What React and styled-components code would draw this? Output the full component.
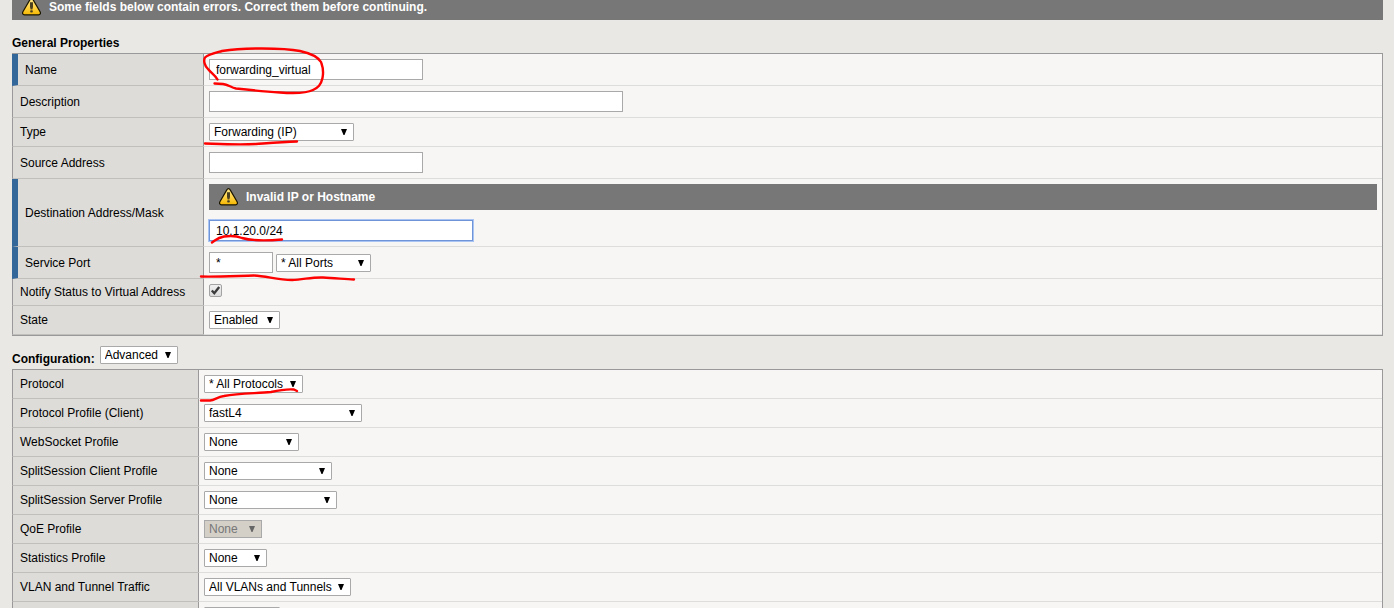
import React from "react";
import styled, { createGlobalStyle } from "styled-components";

const GlobalStyle = createGlobalStyle`
  *, *::before, *::after {
    box-sizing: border-box;
  }

  body {
    margin: 0;
    background-color: #e9e8e4;
    color: #000000;
    font-family: "Liberation Sans", Arial, sans-serif;
    font-size: 12px;
    line-height: 16px;
  }

  input, select {
    font: inherit;
    color: inherit;
  }
`;

const Page = styled.main`
  display: flow-root;
  position: relative;
  padding: 0 11px 0 12px;
`;

const Banner = styled.div`
  display: flex;
  align-items: center;
  gap: 8px;
  height: 26px;
  padding: 0 10px;
  background-color: #777777;
  color: #ffffff;
  font-weight: 700;
`;

// the page message is scrolled partly out of view
const PageBanner = styled(Banner)`
  margin-top: -6px;
`;

const SectionHeader = styled.div`
  display: flex;
  align-items: flex-start;
  gap: 5px;
  padding: 10px 0 1px;
`;

const SectionTitle = styled.h2`
  margin: 0;
  padding-top: 4px;
  font-size: 12px;
  font-weight: 700;
  line-height: 18px;
`;

const Table = styled.table`
  width: 100%;
  table-layout: fixed;
  border-collapse: separate;
  border-spacing: 0;
  border: 1px solid #999999;
  border-left: none;
  background-color: #f7f6f5;
`;

const LabelColumn = styled.col`
  width: ${({ $width }) => $width}px;
`;

const LabelCell = styled.th`
  padding: 0 7px;
  border-left: ${({ $required }) =>
    $required ? "6px solid #336699" : "1px solid #999999"};
  border-bottom: 1px solid #c0bfbb;
  background-color: #dddcd8;
  font-weight: 400;
  text-align: left;
  white-space: nowrap;
`;

const FieldCell = styled.td`
  padding: 5px;
  border-left: 1px solid #999999;
  border-bottom: 1px solid #dddddb;
`;

const FieldStack = styled.div`
  display: flex;
  flex-direction: column;
  align-items: flex-start;
  gap: 10px;

  ${Banner} {
    align-self: stretch;
  }
`;

const FieldRow = styled.div`
  display: flex;
  align-items: center;
  gap: 3px;
`;

const TextInput = styled.input`
  display: block;
  width: ${({ $width }) => $width}px;
  height: 21px;
  padding: 0 6px;
  border: 1px solid ${({ $active }) => ($active ? "#6f95d8" : "#a9a9a9")};
  box-shadow: ${({ $active }) => ($active ? "0 0 0 1px #a9c4f2" : "none")};
  background-color: #ffffff;
  outline: none;
`;

const SelectBox = styled.div`
  position: relative;
  width: ${({ $width }) => $width}px;
  height: 18px;

  svg {
    position: absolute;
    top: 6px;
    right: 6px;
    pointer-events: none;
  }
`;

const StyledSelect = styled.select`
  appearance: none;
  display: block;
  width: 100%;
  height: 18px;
  padding: 0 0 0 4px;
  border: 1px solid #a9a9a9;
  border-radius: 1px;
  background-color: #ffffff;
  line-height: 16px;
  outline: none;

  &:disabled {
    border-radius: 0;
    background-color: #d4d0c8;
    color: #777777;
    opacity: 1;
  }
`;

const CheckboxBox = styled.div`
  position: relative;
  height: 16px;

  svg {
    position: absolute;
    top: 0;
    left: 0;
    pointer-events: none;
  }
`;

const StyledCheckbox = styled.input`
  appearance: none;
  display: block;
  width: 13px;
  height: 13px;
  margin: 0;
  border: 1px solid #a3a3a3;
  border-radius: 2px;
  background: linear-gradient(#f0f0f0, #dcdcdc);
`;

const Markup = styled.svg`
  position: absolute;
  top: 0;
  left: 0;
  pointer-events: none;
`;

const WarningIcon = () => (
  <svg width="19" height="18" viewBox="0 0 19 18" aria-hidden="true">
    <defs>
      <linearGradient id="warn" x1="0" y1="0" x2="0" y2="1">
        <stop offset="0" stopColor="#ffe98a" />
        <stop offset="0.5" stopColor="#ffd34a" />
        <stop offset="1" stopColor="#f5b800" />
      </linearGradient>
    </defs>
    <path
      d="M9.500 0.700c.7 0 1.300.4 1.700 1.200l6.900 11.900c.8 1.500.2 3-1.500 3H2.400c-1.700 0-2.300-1.500-1.500-3L7.800 1.900C8.200 1.100 8.800.7 9.500.7z"
      fill="url(#warn)"
      stroke="#1c1600"
      strokeWidth="1.200"
    />
    <path d="M8 4.200h3v4.800l-.6 2.500H8.600L8 9z" fill="#4a4020" />
    <rect x="8.200" y="12.300" width="2.600" height="2.200" rx="0.8" fill="#4a4020" />
  </svg>
);

const Select = ({ id, width, value, options = [], disabled, label }) => (
  <SelectBox $width={width}>
    <StyledSelect
      id={id}
      defaultValue={value}
      disabled={disabled}
      aria-label={label}
    >
      {[value, ...options].map((option) => (
        <option key={option}>{option}</option>
      ))}
    </StyledSelect>
    <svg width="7" height="6" viewBox="0 0 7 6" aria-hidden="true">
      <path d="M0 0h6L3.500 6h-1z" fill={disabled ? "#666666" : "#000000"} />
    </svg>
  </SelectBox>
);

const Field = ({ id, label, required, children }) => (
  <tr>
    <LabelCell scope="row" $required={required}>
      <label htmlFor={id}>{label}</label>
    </LabelCell>
    <FieldCell>{children}</FieldCell>
  </tr>
);

const configuration = [
  { id: "protocol", label: "Protocol", value: "* All Protocols", width: 99, options: ["TCP", "UDP", "SCTP"] },
  { id: "profile-client", label: "Protocol Profile (Client)", value: "fastL4", width: 158 },
  { id: "websocket", label: "WebSocket Profile", value: "None", width: 95, options: ["websocket"] },
  { id: "split-client", label: "SplitSession Client Profile", value: "None", width: 128 },
  { id: "split-server", label: "SplitSession Server Profile", value: "None", width: 133 },
  { id: "qoe", label: "QoE Profile", value: "None", width: 58, disabled: true },
  { id: "statistics", label: "Statistics Profile", value: "None", width: 63, options: ["stats"] },
  { id: "vlan", label: "VLAN and Tunnel Traffic", value: "All VLANs and Tunnels", width: 147 },
  { id: "snat", label: "Source Address Translation", value: "None", width: 76, options: ["SNAT"] },
];

const App = () => {
  return (
    <>
      <GlobalStyle />
      <Page>
        <PageBanner role="alert">
          <WarningIcon />
          Some fields below contain errors. Correct them before continuing.
        </PageBanner>

        <SectionHeader>
          <SectionTitle>General Properties</SectionTitle>
        </SectionHeader>
        <Table>
          <colgroup>
            <LabelColumn $width={191} />
            <col />
          </colgroup>
          <tbody>
            <Field id="name" label="Name" required>
              <TextInput id="name" $width={214} defaultValue="forwarding_virtual" />
            </Field>
            <Field id="description" label="Description">
              <TextInput id="description" $width={414} />
            </Field>
            <Field id="type" label="Type">
              <Select
                id="type"
                width={145}
                value="Forwarding (IP)"
                options={["Standard", "Performance (Layer 4)"]}
              />
            </Field>
            <Field id="source" label="Source Address">
              <TextInput id="source" $width={214} />
            </Field>
            <Field id="destination" label="Destination Address/Mask" required>
              <FieldStack>
                <Banner role="alert">
                  <WarningIcon />
                  Invalid IP or Hostname
                </Banner>
                <TextInput
                  id="destination"
                  $width={264}
                  $active
                  defaultValue="10.1.20.0/24"
                />
              </FieldStack>
            </Field>
            <Field id="port" label="Service Port" required>
              <FieldRow>
                <TextInput id="port" $width={64} defaultValue="*" />
                <Select
                  label="Port name"
                  width={95}
                  value="* All Ports"
                  options={["HTTP", "HTTPS"]}
                />
              </FieldRow>
            </Field>
            <Field id="notify" label="Notify Status to Virtual Address">
              <CheckboxBox>
                <StyledCheckbox id="notify" type="checkbox" defaultChecked />
                <svg width="13" height="13" viewBox="0 0 13 13" aria-hidden="true">
                  <path
                    d="M2.800 6.500l2.500 2.700L10.200 3"
                    fill="none"
                    stroke="#3c3c3c"
                    strokeWidth="2.400"
                  />
                </svg>
              </CheckboxBox>
            </Field>
            <Field id="state" label="State">
              <Select id="state" width={71} value="Enabled" options={["Disabled"]} />
            </Field>
          </tbody>
        </Table>

        <SectionHeader>
          <SectionTitle as="label" htmlFor="mode">
            Configuration:
          </SectionTitle>
          <Select id="mode" width={78} value="Advanced" options={["Basic"]} />
        </SectionHeader>
        <Table>
          <colgroup>
            <LabelColumn $width={186} />
            <col />
          </colgroup>
          <tbody>
            {configuration.map(({ id, label, ...select }) => (
              <Field key={id} id={id} label={label}>
                <Select id={id} {...select} />
              </Field>
            ))}
          </tbody>
        </Table>

        {/* hand-drawn highlights */}
        <Markup width="480" height="410" viewBox="0 0 480 410" aria-hidden="true">
          <g
            fill="none"
            stroke="#ff0000"
            strokeWidth="2.400"
            strokeLinecap="round"
            strokeLinejoin="round"
          >
            <path d="M217.500 79.500C215 75 211 73 208 69C204 65 203.500 60 205 57.500C208 54.500 215 53 222 51C235 49 250 48.500 262 48.500C278 48.500 290 49 300 51C309 53 318 57 321 62C323 67 323.500 73 322.500 78C321 85 318 87.500 313 90C306 93.500 294 93.500 280 92.500C265 91.500 250 90 236 88.500C231 87.500 228 84.500 223 84L214.500 83.500" />
            <path d="M205 143.500C220 144 238 145 256 144C270 143 282 142 297 141.500" />
            <path d="M212 242.500C217 239 218 237.500 224 236.500C231 235.500 237 236 242 238C252 241 264 241 282 239.500" />
            <path d="M201 276.500C215 277 235 276 254 275.500C267 276 277 280 292 280C304 279.500 312 277 323 277.500C334 278 344 279 354 279.500" />
            <path d="M201 400.500H210C215 400 217 397 224 396C240 393 258 393.500 271 392C280 390 288 389 294 389.500L297 391" />
          </g>
        </Markup>
      </Page>
    </>
  );
};

export default App;
